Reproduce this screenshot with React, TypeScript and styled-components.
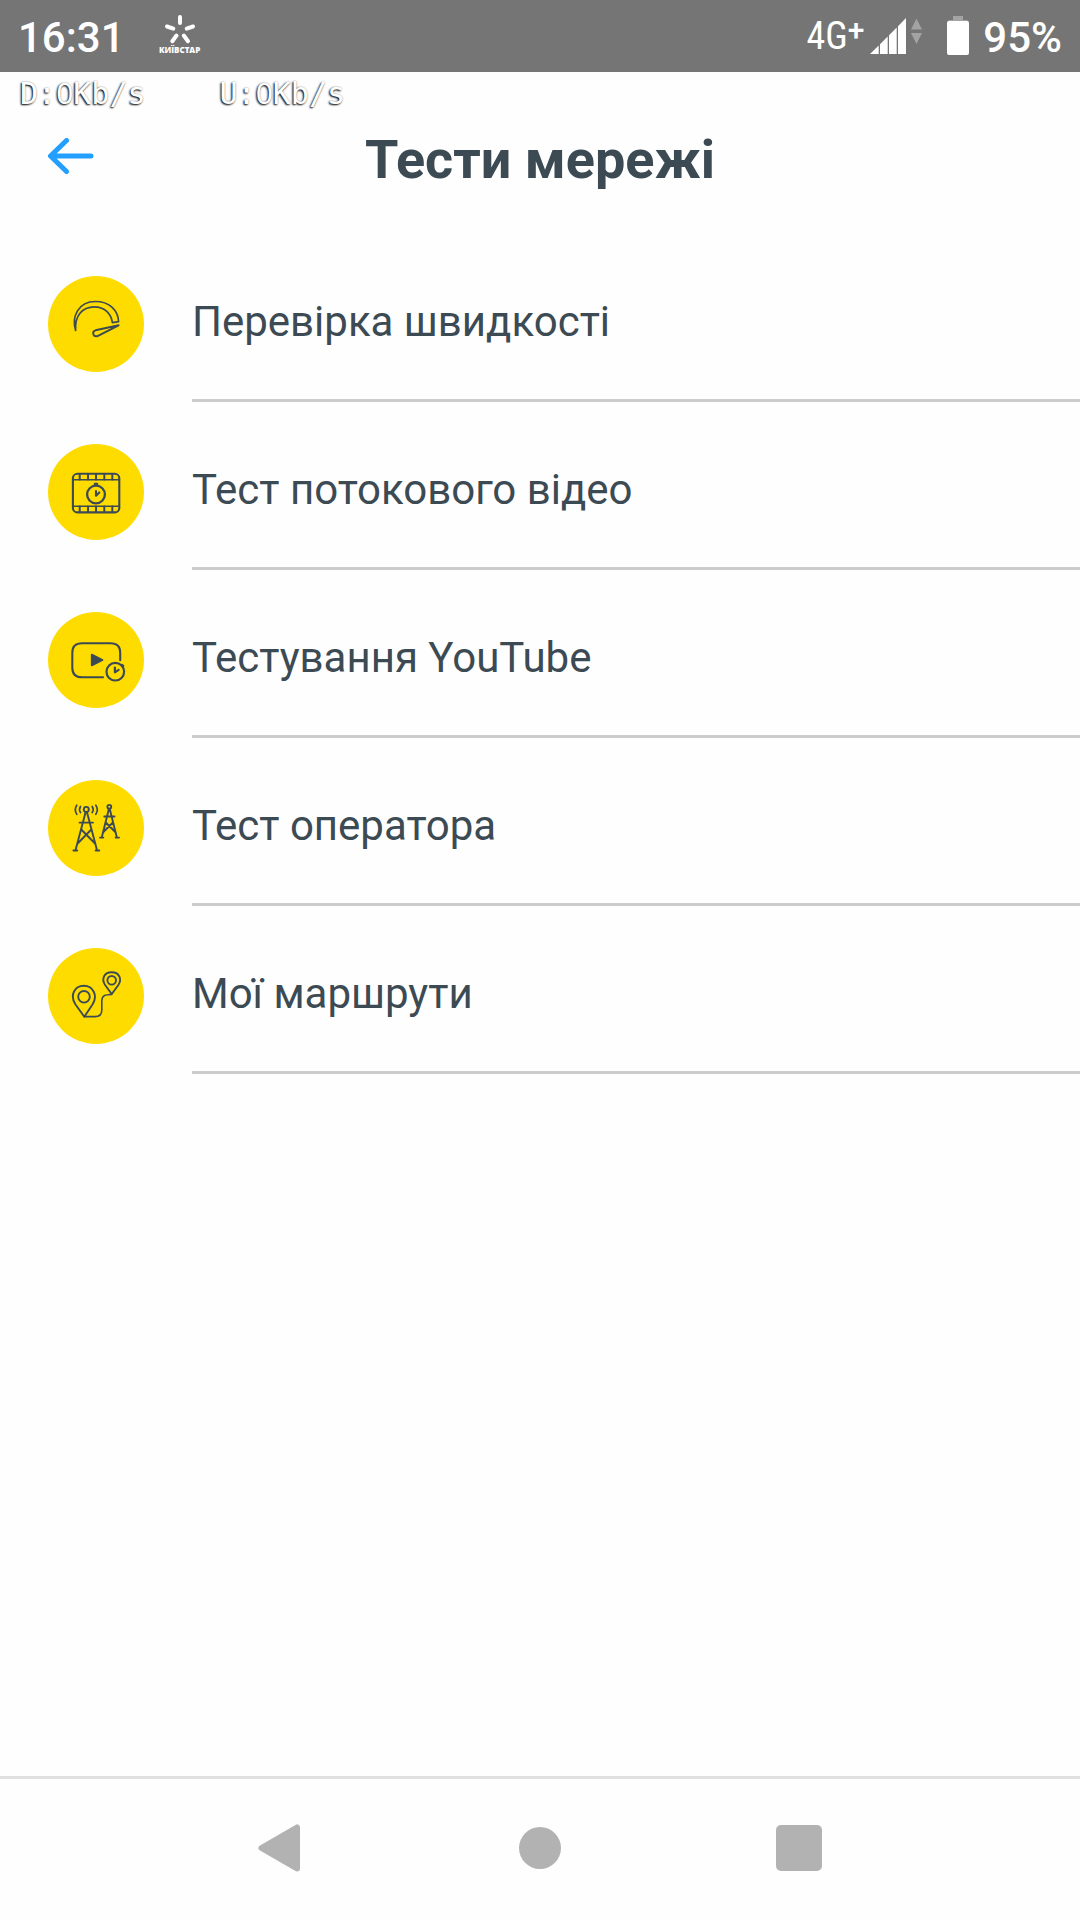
import React from "react";
import styled, { createGlobalStyle } from "styled-components";

const GlobalStyle = createGlobalStyle`
  *, *::before, *::after { box-sizing: border-box; }
  body { margin: 0; background: #fefefe; font-family: Roboto, sans-serif; }
  button { margin: 0; padding: 0; border: 0; background: none; font: inherit; color: inherit; cursor: pointer; }
`;

const Screen = styled.div`
  display: flex;
  flex-direction: column;
  min-height: 100vh;
  background: #fefefe;
  color: #3c4a53;
`;

const StatusBar = styled.header`
  display: flex;
  align-items: center;
  justify-content: space-between;
  height: 72px;
  padding: 0 18px;
  background: #757575;
  color: #fff;
`;

const StatusGroup = styled.div<{ $gap: number }>`
  display: flex;
  align-items: center;
  gap: ${(p) => p.$gap}px;
`;

const StatusText = styled.span`
  font-size: 42px;
  font-weight: 500;
  line-height: 48px;
  padding-top: 4px;
`;

const Network = styled.span`
  display: flex;
  align-items: flex-start;
  font-family: "Roboto Condensed", Roboto, sans-serif;
  font-size: 38px;
  line-height: 40px;
`;

const Plus = styled.span`
  font-family: Roboto, sans-serif;
  font-size: 30px;
  font-weight: 500;
  line-height: 28px;
`;

const Carrier = styled.span`
  display: flex;
  flex-direction: column;
  align-items: center;
  width: 40px;
  padding-bottom: 4px;
  font-family: "Open Sans", sans-serif;
  font-size: 8px;
  font-weight: 800;
  line-height: 8px;
`;

const SpeedLine = styled.div`
  display: flex;
  gap: 74px;
  height: 36px;
  padding: 0 20px;
  color: #fff;
  font-family: "DejaVu Sans Mono", monospace;
  font-size: 30px;
  line-height: 42px;
  text-shadow: -1px 1px 2px #000, 0 0 2px #aaa;
`;

const Digit = styled.span`
  font-family: "Open Sans", sans-serif;
`;

const TitleBar = styled.div`
  display: grid;
  grid-template-columns: 96px 1fr 96px;
  align-items: center;
  height: 96px;
  padding: 0 48px;
`;

const BackButton = styled.button`
  display: flex;
  justify-self: start;
`;

const Title = styled.h1`
  margin: 0;
  padding-top: 8px;
  font-size: 54px;
  font-weight: 700;
  line-height: 64px;
  text-align: center;
`;

const TestList = styled.ul`
  flex: 1;
  margin: 30px 0 0;
  padding: 0;
  list-style: none;
`;

const TestButton = styled.button`
  display: flex;
  width: 100%;
  height: 168px;
  padding-left: 48px;
  gap: 48px;
  text-align: left;
`;

const Badge = styled.span`
  flex: none;
  width: 96px;
  height: 96px;
  margin-top: 42px;
  border-radius: 50%;
  background: #ffdc00;
`;

const TestLabel = styled.span`
  flex: 1;
  align-self: stretch;
  padding-top: 64px;
  border-bottom: 3px solid #cbcbcb;
  font-size: 42px;
  line-height: 48px;
`;

const NavBar = styled.nav`
  display: flex;
  justify-content: center;
  height: 144px;
  padding-bottom: 4px;
  border-top: 3px solid #e0e0e0;
`;

const NavButton = styled.button`
  display: flex;
  align-items: center;
  justify-content: center;
  width: 24%;
`;

function Drawing({ children }: { children: React.ReactNode }) {
  return (
    <svg
      width="96"
      height="96"
      viewBox="8 11 96 96"
      fill="none"
      stroke="#3c4a53"
      strokeWidth="1.9"
      strokeLinecap="round"
      strokeLinejoin="round"
      aria-hidden="true"
    >
      {children}
    </svg>
  );
}

const SpeedIcon = () => (
  <Drawing>
    <path d="M35.6 65.5C31.5 52 38 36.5 55.5 36.5C69 36.5 78 45 78.6 56.7L72.4 57.6C71 48 64 41.8 54.5 41.8C42 41.8 34.5 51 35.6 65.5Z" strokeWidth="1.7" />
    <path d="M78.6 60.3L55.5 65.3C52 66.2 52.5 71.8 57.2 71.2Q58 71 59 70.4Z" />
  </Drawing>
);

const VideoIcon = () => (
  <Drawing>
    <rect x="32.9" y="40.8" width="46.4" height="38.6" rx="4.5" strokeWidth="2.1" />
    <path d="M33 46.8H79M33 73.3H79" strokeWidth="1.5" />
    <path d="M39.7 41V46.5M48 41V46.5M56 41V46.5M64.3 41V46.5M72.3 41V46.5M39.7 73.5V79M48 73.5V79M56 73.5V79M64.3 73.5V79M72.3 73.5V79" strokeWidth="2" />
    <circle cx="56" cy="61.5" r="8.9" strokeWidth="2.3" />
    <path d="M54.8 51.5V50.8H57.2V51.5M56 58V62.8L59.3 59.4" strokeWidth="2.1" />
  </Drawing>
);

const YouTubeIcon = () => (
  <Drawing>
    <path d="M63 76.2H42C35.5 76.2 32.3 73.2 32.3 66.7V51.7C32.3 45.2 35.5 42.2 42 42.2H70.5C77 42.2 80.2 45.2 80.2 51.7V59.2" strokeWidth="2.1" />
    <path d="M51.8 53.7V64.3L62.5 59Z" fill="#3c4a53" />
    <circle cx="75.3" cy="70.7" r="8.8" strokeWidth="2.2" />
    <path d="M81.8 63.9L83.2 64.8M74.9 66.5V71.3L78.6 68.8" strokeWidth="2.2" />
  </Drawing>
);

const TowerIcon = () => (
  <Drawing>
    <circle cx="46.3" cy="40.4" r="2.5" />
    <path d="M45.6 43.3L35.5 81.2M47 43.3L57 81.2M39.5 53.6H53M41.3 60.5L55.5 75M51.3 60.5L37.1 75M33.4 81.5H37.2M55.6 81.5H59.3" />
    <path d="M40.5 37.5Q38.5 40.5 40.5 43.5M36.8 36.2Q33.8 40.5 36.8 45.3M52.2 37.5Q54.2 40.5 52.2 43.5M55.8 36.2Q58.8 40.5 55.8 45.3" strokeWidth="1.7" />
    <circle cx="69.3" cy="37.8" r="1.9" />
    <path d="M68.8 40.3L61.8 68.3M69.8 40.3L76.8 68.3M64.3 47.5H74.5M65.8 53.5L75.8 63.5M72.9 53.5L62.9 63.5M60 68.6H63.3M75.6 68.6H79" />
  </Drawing>
);

const RouteIcon = () => (
  <Drawing>
    <path d="M44.3 79.8L35.5 67.5C29.5 58.5 34.5 48.8 43.8 48.8C53 48.8 58.2 58.5 52.5 67.5Z" />
    <circle cx="44" cy="59.8" r="5.8" />
    <path d="M71.7 57L65.3 48.2C60.8 41.5 64.5 35.2 71.7 35.2C78.8 35.2 82.5 41.5 78.2 48.2Z" />
    <circle cx="71.7" cy="43.3" r="4.3" />
    <path d="M44.3 79.6H55C59.5 79.6 61.8 77 61.8 73V64C61.8 60 64 57.7 68 57.7L71.7 57.4" strokeWidth="1.6" />
  </Drawing>
);

const tests = [
  { label: "Перевірка швидкості", Icon: SpeedIcon },
  { label: "Тест потокового відео", Icon: VideoIcon },
  { label: "Тестування YouTube", Icon: YouTubeIcon },
  { label: "Тест оператора", Icon: TowerIcon },
  { label: "Мої маршрути", Icon: RouteIcon },
];

export default function App() {
  return (
    <>
      <GlobalStyle />
      <Screen>
        <StatusBar>
          <StatusGroup $gap={35}>
            <StatusText>16:31</StatusText>
            <Carrier>
              <svg width="32" height="32" viewBox="0 0 32 32" stroke="#fff" strokeWidth="4" strokeLinecap="round" aria-hidden="true">
                <path d="M16 3V9M3 12.5L9.3 14.6M29 12.5L22.7 14.6M12.5 21.5L8.3 27.2M19.8 21.5L24 27.2" />
              </svg>
              КИЇВСТАР
            </Carrier>
          </StatusGroup>
          <StatusGroup $gap={25}>
            <StatusGroup $gap={6}>
              <Network>
                4G<Plus>+</Plus>
              </Network>
              <svg width="52" height="36" viewBox="0 0 52 36" aria-hidden="true">
                <path d="M0 36L8.7 27.5V36ZM10 36V26.2L17.7 18.5V36ZM19 36V17.2L26.7 9.5V36ZM28 36V8.2L36 0V36Z" fill="#fff" />
                <path d="M41 11.5L46.5 .5L52 11.5ZM41 15L46.5 26L52 15Z" fill="#a3a3a3" />
              </svg>
            </StatusGroup>
            <StatusGroup $gap={14}>
              <svg width="22" height="40" viewBox="0 0 22 40" aria-hidden="true">
                <path d="M6 0H16V4H20L22 6H0L2 4H6Z" fill="#a3a3a3" />
                <rect y="5" width="22" height="34" rx="2" fill="#fff" />
              </svg>
              <StatusText>95%</StatusText>
            </StatusGroup>
          </StatusGroup>
        </StatusBar>

        <SpeedLine>
          <span>D:<Digit>0</Digit>Kb/s</span>
          <span>U:<Digit>0</Digit>Kb/s</span>
        </SpeedLine>

        <TitleBar>
          <BackButton aria-label="Назад">
            <svg width="46" height="36" viewBox="0 0 46 36" fill="none" stroke="#229fff" strokeWidth="5" strokeLinecap="round" strokeLinejoin="round" aria-hidden="true">
              <path d="M18.5 2.5L2.5 18L18.5 33.5M3 18H43" />
            </svg>
          </BackButton>
          <Title>Тести мережі</Title>
        </TitleBar>

        <TestList>
          {tests.map(({ label, Icon }) => (
            <li key={label}>
              <TestButton>
                <Badge>
                  <Icon />
                </Badge>
                <TestLabel>{label}</TestLabel>
              </TestButton>
            </li>
          ))}
        </TestList>

        <NavBar>
          <NavButton aria-label="Назад">
            <svg width="46" height="48" viewBox="0 0 46 48" fill="#b2b2b2" stroke="#b2b2b2" strokeWidth="6" strokeLinejoin="round" aria-hidden="true">
              <path d="M39 3.5V44.5L3.5 24Z" />
            </svg>
          </NavButton>
          <NavButton aria-label="Додому">
            <svg width="42" height="42" aria-hidden="true">
              <circle cx="21" cy="21" r="21" fill="#b2b2b2" />
            </svg>
          </NavButton>
          <NavButton aria-label="Огляд">
            <svg width="46" height="46" aria-hidden="true">
              <rect width="46" height="46" rx="5" fill="#b2b2b2" />
            </svg>
          </NavButton>
        </NavBar>
      </Screen>
    </>
  );
}
